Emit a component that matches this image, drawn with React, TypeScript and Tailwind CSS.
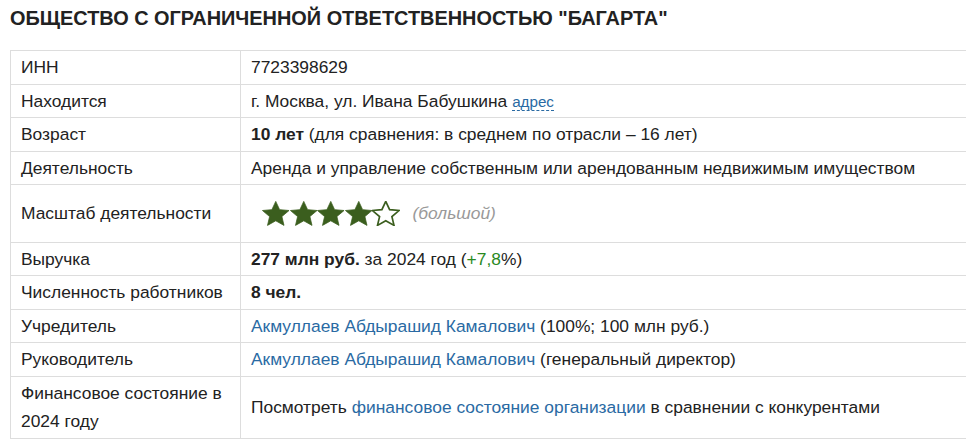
const STAR_PATH =
  'M12 1.8l2.95 6.6 7.2.7-5.45 4.85 1.6 7.05L12 17.35 5.7 21l1.6-7.05L1.85 9.1l7.2-.7z';

function Star({ filled }: { filled: boolean }) {
  return (
    <svg width="27.5" height="25" viewBox="1.5 1.5 21 20" preserveAspectRatio="none" className="block">
      <path
        d={STAR_PATH}
        fill={filled ? '#3b5e1e' : '#ffffff'}
        stroke="#3b5e1e"
        strokeWidth={filled ? 0.6 : 1.3}
        strokeLinejoin="miter"
      />
    </svg>
  );
}

function Row({ label, children, tall }: { label: React.ReactNode; children: React.ReactNode; tall?: boolean }) {
  return (
    <tr>
      <td
        className={`border border-[#dddddd] px-[10px] ${tall ? 'py-[14px]' : 'py-[2px]'} align-middle w-[230px]`}
      >
        {label}
      </td>
      <td className={`border border-[#dddddd] px-[10px] ${tall ? 'py-[14px]' : 'py-[2px]'} align-middle`}>
        {children}
      </td>
    </tr>
  );
}

const link = 'text-[#2a6aa3]';

export default function App() {
  return (
    <div className="w-[966px] h-[439px] overflow-hidden bg-white font-['Liberation_Sans',Arial,sans-serif] text-[#222222]">
      <h1 className="px-[10px] pt-[5px] text-[19.9px] leading-[26px] font-bold text-[#222222]">
        ОБЩЕСТВО С ОГРАНИЧЕННОЙ ОТВЕТСТВЕННОСТЬЮ "БАГАРТА"
      </h1>
      <table className="ml-[10px] mt-[19px] w-[1000px] border-collapse text-[17.4px] leading-[28.5px]">
        <tbody>
          <Row label="ИНН">7723398629</Row>
          <Row label="Находится">
            г. Москва, ул. Ивана Бабушкина{' '}
            <span className={`${link} text-[15.2px] border-b border-dashed border-[#2a6aa3] leading-[16px] inline-block`}>
              адрес
            </span>
          </Row>
          <Row label="Возраст">
            <b>10 лет</b> (для сравнения: в среднем по отрасли – 16 лет)
          </Row>
          <Row label="Деятельность">Аренда и управление собственным или арендованным недвижимым имуществом</Row>
          <Row label="Масштаб деятельности" tall>
            <div className="flex items-center pl-[11px]">
              <div className="flex">
                <Star filled />
                <Star filled />
                <Star filled />
                <Star filled />
                <Star filled={false} />
              </div>
              <span className="ml-[13px] italic text-[#999999]">(большой)</span>
            </div>
          </Row>
          <Row label="Выручка">
            <b>277 млн руб.</b> за 2024 год (<span className="text-[#2a8a1f]">+7,8</span>%)
          </Row>
          <Row label="Численность работников">
            <b>8 чел.</b>
          </Row>
          <Row label="Учредитель">
            <span className={link}>Акмуллаев Абдырашид Камалович</span> (100%; 100 млн руб.)
          </Row>
          <Row label="Руководитель">
            <span className={link}>Акмуллаев Абдырашид Камалович</span> (генеральный директор)
          </Row>
          <Row label="Финансовое состояние в 2024 году">
            Посмотреть <span className={link}>финансовое состояние организации</span> в сравнении с конкурентами
          </Row>
        </tbody>
      </table>
    </div>
  );
}
